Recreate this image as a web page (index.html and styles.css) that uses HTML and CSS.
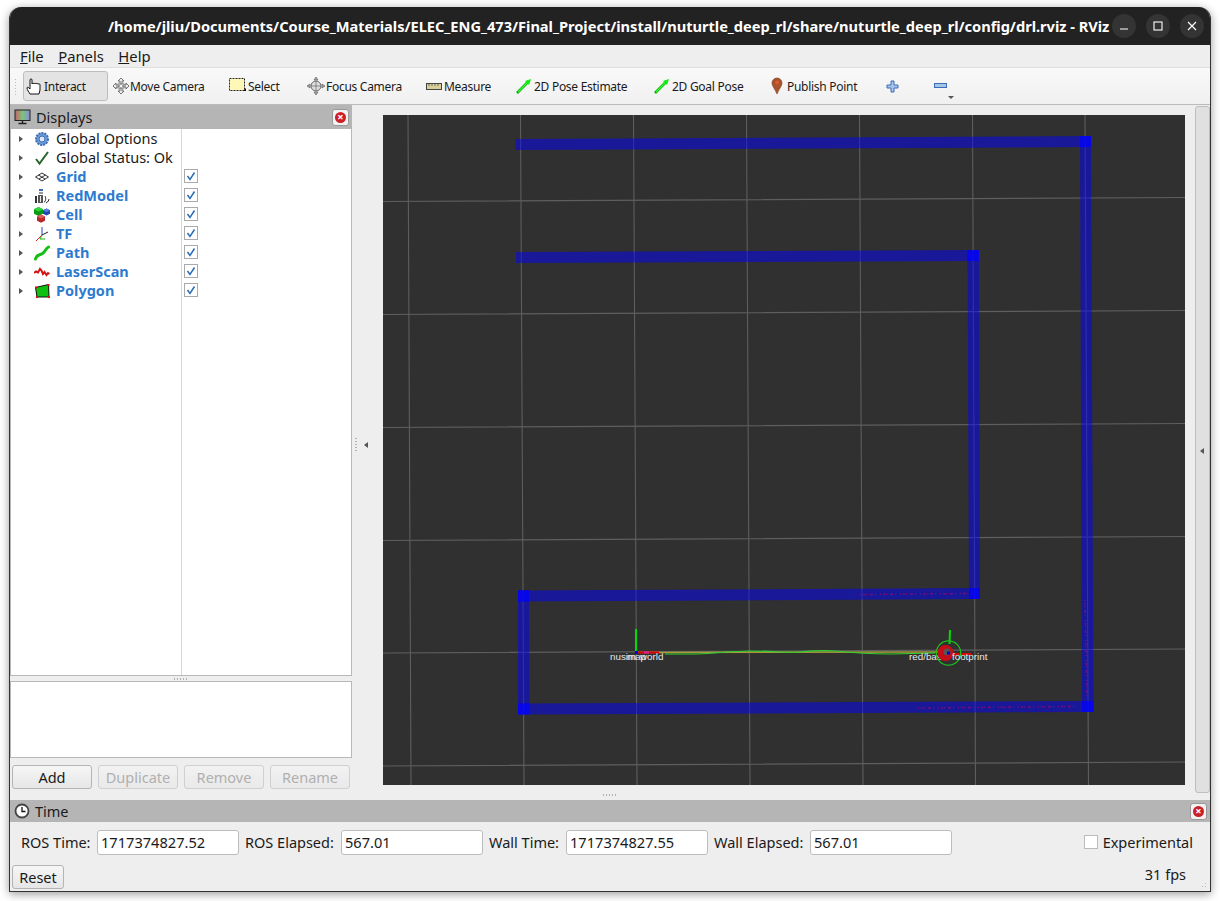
FILE: index.html
```html
<!DOCTYPE html>
<html lang="en">
<head>
<meta charset="utf-8">
<title>RViz</title>
<link rel="stylesheet" href="styles.css">
</head>
<body>
<div class="window">
  <header class="titlebar">
    <div class="title">/home/jliu/Documents/Course_Materials/ELEC_ENG_473/Final_Project/install/nuturtle_deep_rl/share/nuturtle_deep_rl/config/drl.rviz - RViz</div>
    <div class="wm">
      <span class="wm-btn"><svg width="10" height="10" viewBox="0 0 10 10"><path d="M1 8h8" stroke="#fff" stroke-width="1.2"/></svg></span>
      <span class="wm-btn"><svg width="10" height="10" viewBox="0 0 10 10"><rect x="1" y="1" width="8" height="8" fill="none" stroke="#fff" stroke-width="1.1"/></svg></span>
      <span class="wm-btn"><svg width="10" height="10" viewBox="0 0 10 10"><path d="M1 1l8 8M9 1l-8 8" stroke="#fff" stroke-width="1.1"/></svg></span>
    </div>
  </header>
  <nav class="menubar">
    <span><u>F</u>ile</span><span><u>P</u>anels</span><span><u>H</u>elp</span>
  </nav>
  <div class="toolbar">
    <div class="grip"></div>
    <div class="tool active tool-interact">
      <svg width="18" height="18" viewBox="0 0 18 18"><path d="M4 17c-1-2-3-4-3-6 0-1 1-1 2 0l1 1V3c0-1.500 2-1.500 2 0v4c0-1 2-1 2 0 0-1 2-1 2 0 0-.8 2-.8 2 .2 0-.6 2-.6 2 .5V13l-1 4z" fill="#fff" stroke="#111" stroke-width="1"/></svg>
      <span>Interact</span>
    </div>
    <div class="tool tool-move">
      <svg width="18" height="18" viewBox="0 0 18 18"><path d="M9 1l3 3h-2v3h-2V4H6zM9 17l3-3h-2v-3h-2v3H6zM1 9l3-3v2h3v2H4v2zM17 9l-3-3v2h-3v2h3v2z" fill="#eee" stroke="#555" stroke-width=".8"/><path d="M5 7h8v4H5zM7 5v8M11 5v8" fill="none" stroke="#888" stroke-width=".6"/></svg>
      <span>Move Camera</span>
    </div>
    <div class="tool tool-select">
      <svg width="17" height="16" viewBox="0 0 17 16"><rect x=".5" y=".5" width="15" height="12" fill="#fdf8b8" stroke="#222" stroke-dasharray="2 1"/><path d="M14 13h3v-3z" fill="#111"/></svg>
      <span>Select</span>
    </div>
    <div class="tool tool-focus">
      <svg width="18" height="18" viewBox="0 0 18 18"><circle cx="9" cy="9" r="5" fill="#ddd" stroke="#666"/><path d="M9 0l2 3H7zM9 18l2-3H7zM0 9l3-2v4zM18 9l-3-2v4zM4 9h10M9 4v10" fill="#aaa" stroke="#666" stroke-width=".7"/></svg>
      <span>Focus Camera</span>
    </div>
    <div class="tool tool-measure">
      <svg width="16" height="7" viewBox="0 0 16 7"><rect x=".5" y=".5" width="15" height="6" fill="#d8cf9a" stroke="#444"/><path d="M3 1v2M6 1v2M9 1v2M12 1v2" stroke="#444" stroke-width=".7"/></svg>
      <span>Measure</span>
    </div>
    <div class="tool tool-pose">
      <svg width="16" height="16" viewBox="0 0 16 16"><path d="M1 15L13 3" stroke="#0a0" stroke-width="2.600"/><path d="M2 14L13 3" stroke="#3f3" stroke-width="1.200"/><path d="M15 1L9 3l4 4z" fill="#1e1"/></svg>
      <span>2D Pose Estimate</span>
    </div>
    <div class="tool tool-goal">
      <svg width="16" height="16" viewBox="0 0 16 16"><path d="M1 15L13 3" stroke="#0a0" stroke-width="2.600"/><path d="M2 14L13 3" stroke="#3f3" stroke-width="1.200"/><path d="M15 1L9 3l4 4z" fill="#1e1"/></svg>
      <span>2D Goal Pose</span>
    </div>
    <div class="tool tool-point">
      <svg width="12" height="18" viewBox="0 0 12 18"><path d="M6 17C4 12 1 9 1 6a5 5 0 0 1 10 0c0 3-3 6-5 11z" fill="#a8552f" stroke="#7a3a20" stroke-width=".6"/><circle cx="6" cy="5.500" r="1.800" fill="#e35a2a"/></svg>
      <span>Publish Point</span>
    </div>
    <div class="tool tool-plus">
      <svg width="13" height="13" viewBox="0 0 13 13"><path d="M5 1h3v4h4v3H8v4H5V8H1V5h4z" fill="#a9c4ea" stroke="#3b6db5"/></svg>
    </div>
    <div class="tool tool-minus">
      <svg width="13" height="6" viewBox="0 0 13 6"><rect x=".5" y=".5" width="12" height="4" fill="#a9c4ea" stroke="#3b6db5"/></svg>
      <i class="more"></i>
    </div>
  </div>

  <div class="main">
    <aside class="dock">
      <div class="dock-title">
        <svg class="dock-icon" width="17" height="16" viewBox="0 0 17 16"><defs><linearGradient id="scr" x1="0" x2="1" y1="0" y2="0"><stop offset="0" stop-color="#c8626a"/><stop offset=".5" stop-color="#7cc47c"/><stop offset="1" stop-color="#8a8ad8"/></linearGradient></defs><rect x="1" y="1" width="15" height="10.500" fill="url(#scr)" stroke="#222"/><path d="M8.500 12v2M4.500 14.500h8" stroke="#222" stroke-width="1.400"/></svg>
        <span>Displays</span>
        <span class="close"><i></i></span>
      </div>
      <div class="tree">
        <div class="row"><i class="arrow"></i><svg class="ico" viewBox="0 0 16 16"><circle cx="8" cy="8" r="6" fill="#6f9bd8" stroke="#3b6db5" stroke-width="2" stroke-dasharray="2 1"/><circle cx="8" cy="8" r="3" fill="#dbe7f7" stroke="#3b6db5"/></svg><span class="label">Global Options</span></div>
        <div class="row"><i class="arrow"></i><svg class="ico" viewBox="0 0 16 16"><path d="M2 9l3.500 4.500L14 2" fill="none" stroke="#26662c" stroke-width="2"/></svg><span class="label">Global Status: Ok</span></div>
        <div class="row"><i class="arrow"></i><svg class="ico" viewBox="0 0 16 16"><path d="M1.500 8L8 4l6.500 4L8 12zM4.500 6L11 10M11.500 6L5 10" fill="none" stroke="#333" stroke-width="1"/></svg><span class="label link">Grid</span><span class="check"><svg width="12" height="12" viewBox="0 0 12 12"><path d="M2.500 6l2.500 3.500 4.500-7" fill="none" stroke="#2a6cb5" stroke-width="1.500"/></svg></span></div>
        <div class="row"><i class="arrow"></i><svg class="ico" viewBox="0 0 16 16"><rect x="5" y="1" width="4" height="2" fill="#3b6db5"/><path d="M5 4h4v2H5z" fill="#999"/><rect x="1" y="8" width="2" height="7" fill="#333"/><rect x="4" y="7" width="5" height="8" fill="#555"/><path d="M6 8h1v6H6z" fill="#eee"/><path d="M10 14c2 0 2-5 1-6M12 15c2-1 3-3 3-4" stroke="#222" fill="none"/></svg><span class="label link">RedModel</span><span class="check"><svg width="12" height="12" viewBox="0 0 12 12"><path d="M2.500 6l2.500 3.500 4.500-7" fill="none" stroke="#2a6cb5" stroke-width="1.500"/></svg></span></div>
        <div class="row"><i class="arrow"></i><svg class="ico" viewBox="0 0 16 16"><path d="M4.500 0L9 2.300v4.400L4.500 9 0 6.700V2.300z" fill="#0b9a16"/><path d="M4.500 0L9 2.300 4.500 4.600 0 2.300z" fill="#2fd83a"/><path d="M12.500 1.500L16 3.300v3.400l-3.500 1.800L9 6.700V3.300z" fill="#2448b8"/><path d="M12.500 1.500L16 3.300l-3.500 1.800L9 3.300z" fill="#5a80e8"/><path d="M7 7.500l4 2v4.300l-4 2-4-2V9.500z" fill="#b52a2a"/><path d="M7 7.500l4 2-4 2-4-2z" fill="#e06060"/></svg><span class="label link">Cell</span><span class="check"><svg width="12" height="12" viewBox="0 0 12 12"><path d="M2.500 6l2.500 3.500 4.500-7" fill="none" stroke="#2a6cb5" stroke-width="1.500"/></svg></span></div>
        <div class="row"><i class="arrow"></i><svg class="ico" viewBox="0 0 16 16"><path d="M8 9V1" stroke="#2b3fc8"/><path d="M8 9l6-3" stroke="#222"/><path d="M8 9L2 15" stroke="#d22"/><path d="M8 9l-2 4 5 0" stroke="#1b1" fill="none"/></svg><span class="label link">TF</span><span class="check"><svg width="12" height="12" viewBox="0 0 12 12"><path d="M2.500 6l2.500 3.500 4.500-7" fill="none" stroke="#2a6cb5" stroke-width="1.500"/></svg></span></div>
        <div class="row"><i class="arrow"></i><svg class="ico" viewBox="0 0 16 16"><path d="M1.500 14c1-5 4-3.500 7-5.500s3-5 6-6.500" fill="none" stroke="#12c012" stroke-width="3" stroke-linecap="round"/></svg><span class="label link">Path</span><span class="check"><svg width="12" height="12" viewBox="0 0 12 12"><path d="M2.500 6l2.500 3.500 4.500-7" fill="none" stroke="#2a6cb5" stroke-width="1.500"/></svg></span></div>
        <div class="row"><i class="arrow"></i><svg class="ico" viewBox="0 0 16 16"><path d="M0 9l2-1.500 2 1 2-3.500 1.500 1.500 1.500 3.500 1.500-2 2 3 1.500-2 1.500 1" fill="none" stroke="#d41414" stroke-width="2"/></svg><span class="label link">LaserScan</span><span class="check"><svg width="12" height="12" viewBox="0 0 12 12"><path d="M2.500 6l2.500 3.500 4.500-7" fill="none" stroke="#2a6cb5" stroke-width="1.500"/></svg></span></div>
        <div class="row"><i class="arrow"></i><svg class="ico" viewBox="0 0 16 16"><path d="M1.500 4.500L14.500 1.500 15 14H3z" fill="#10c010" stroke="#111"/><path d="M1 3.500h2v2H1zM13.500 1h2v2h-2zM14 13h2v2h-2zM2 13h2v2H2z" fill="#e01010"/></svg><span class="label link">Polygon</span><span class="check"><svg width="12" height="12" viewBox="0 0 12 12"><path d="M2.500 6l2.500 3.500 4.500-7" fill="none" stroke="#2a6cb5" stroke-width="1.500"/></svg></span></div>
      </div>
      <div class="splitter"><i class="dots"></i></div>
      <div class="desc"></div>
      <div class="dock-buttons">
        <button class="btn">Add</button>
        <button class="btn off">Duplicate</button>
        <button class="btn off">Remove</button>
        <button class="btn off">Rename</button>
      </div>
    </aside>
    <div class="collapse"><i class="vgrip"></i><i class="tri-left"></i></div>
    <div class="view">
      <svg class="scene" width="802" height="670" viewBox="383 115 802 670">
        <rect x="383" y="115" width="802" height="670" fill="#303030"/>
        <g class="grid">
          <path d="M408 115L411 785M520.500 115L524 785M633.500 115L637 785M746.500 115L750 785M859.500 115L863 785M972.500 115L975.500 785M1085 115L1088.500 785"/>
          <path d="M383 201.500L1185 197.500M383 314.500L1185 310.500M383 427.500L1185 423.500M383 540.500L1185 536.500M383 653L1185 649M383 766L1185 762"/>
        </g>
        <g class="walls">
          <polygon points="515.500,139 1091,136 1091,147 515.500,150"/>
          <polygon points="1080,136 1091,136 1093.500,712 1082,712"/>
          <polygon points="516,252 979,250 979,261 516,263"/>
          <polygon points="967.500,250 979,250 980,599 969,599"/>
          <polygon points="518,590.500 980,588 980,599 518,601.500"/>
          <polygon points="518,590 529,590 529.500,714.500 518,714.500"/>
          <polygon points="518,703.500 1093.500,701 1093.500,712 518,714.500"/>
          <polygon points="1080,136 1091,136 1091,147 1080,147"/>
          <polygon points="967.500,250 979,250 979,261 967.500,261"/>
          <polygon points="969,588 980,588 980,599 969,599"/>
          <polygon points="518,590.500 529,590.500 529,601.500 518,601.500"/>
          <polygon points="518,703.500 529.500,703.500 529.500,714.500 518,714.500"/>
          <polygon points="1082,701 1093.500,701 1093.500,712 1082,712"/>
        </g>
        <path class="scan" d="M860 594.500L968 593.500M918 708L1076 706.500M1085 600L1087 700"/>
        <path class="trail-a" d="M640 652.500L940 652"/>
        <path class="trail-b" d="M665 654L690 654C710 654 730 651 750 651S790 653 800 652 825 650 835 651 870 654 890 654L935 653"/>
        <path class="axis-g" d="M636 629V652"/>
        <path class="axis-r" d="M638 652.500H659"/>
        <path class="axis-m" d="M644 652.500h5"/>
        <rect x="635" y="651" width="3" height="3" fill="#0000e0"/>
        <text class="tf" x="610" y="660">nusim</text>
        <text class="tf" x="627" y="660">map</text>
        <text class="tf" x="640" y="660">world</text>
        <text class="tf" x="909" y="660">red/base</text>
        <path class="axis-r" d="M950 654H971.500"/>
        <circle class="blob" cx="945.500" cy="653" r="8"/>
        <circle cx="947" cy="652" r="3.500" fill="#555"/>
        <rect x="947" y="651.500" width="3" height="3" fill="#0000e0"/>
        <path class="axis-g" d="M950 630L949.500 644"/>
        <circle class="ring" cx="948.500" cy="653" r="12.200"/>
        <text class="tf" x="952" y="660">footprint</text>
      </svg>
    </div>
    <div class="scroll"><div class="thumb"></div></div>
  </div>
  <div class="hsplit"><i class="dots"></i></div>
  <section class="time">
    <div class="dock-title time-title">
      <svg class="dock-icon" width="16" height="16" viewBox="0 0 16 16"><circle cx="8" cy="8" r="6.500" fill="#fff" stroke="#444" stroke-width="1.800"/><path d="M8 4v4.500h3.500" fill="none" stroke="#111" stroke-width="1.300"/></svg>
      <span>Time</span>
      <span class="close"><i></i></span>
    </div>
    <div class="time-row">
      <label class="lab-time">ROS Time:</label><span class="field">1717374827.52</span>
      <label class="lab-elapsed">ROS Elapsed:</label><span class="field">567.01</span>
      <label class="lab-wall">Wall Time:</label><span class="field">1717374827.55</span>
      <label class="lab-elapsed">Wall Elapsed:</label><span class="field">567.01</span>
      <span class="exp"><span class="box"></span>Experimental</span>
    </div>
    <div class="reset-row">
      <button class="btn reset">Reset</button>
      <span class="fps">31 fps</span>
    </div>
    <i class="sizegrip"></i>
  </section>
</div>
</body>
</html>
```
FILE: styles.css
```css
* { box-sizing: border-box; }
html, body { margin: 0; height: 100%; }
body {
  background: #fff;
  font-family: "Noto Sans", "Open Sans", sans-serif;
  font-size: 14px;
  color: #1a1a1a;
  padding: 7px 9px 9px 9px;
  overflow: hidden;
}
.window {
  width: 1202px;
  height: 885px;
  background: #eeeeee;
  border-radius: 12px 12px 0 0;
  box-shadow: 0 2px 10px rgba(0,0,0,.4);
  border: 1px solid #333;
  border-top: 0;
  display: flex;
  flex-direction: column;
  overflow: hidden;
}
.titlebar {
  height: 38px;
  flex: none;
  background: #222;
  color: #fff;
  display: flex;
  align-items: center;
  position: relative;
  padding-left: 98px;
}
.title {
  font-size: 14.650px;
  font-weight: 700;
  white-space: nowrap;
  letter-spacing: -.03px;
}
.wm { position: absolute; right: 6px; top: 7px; display: flex; gap: 10px; }
.wm-btn {
  width: 24px; height: 24px; border-radius: 50%;
  background: #343434;
  display: flex; align-items: center; justify-content: center;
}
.menubar {
  height: 22px; flex: none;
  background: #eeeeee;
  display: flex;
  gap: 14.500px;
  padding-left: 10px;
  align-items: center;
  font-size: 14.800px;
}
.toolbar {
  height: 38px; flex: none;
  display: flex;
  align-items: center;
  position: relative;
  background: linear-gradient(#f9f9f9, #f0f0f0);
  border-top: 1px solid #dedede;
  border-bottom: 1px solid #bbb;
  font-size: 12px;
  letter-spacing: -.28px;
}
.grip {
  width: 4px; height: 17px; margin: 0 5px 0 4px; flex: none;
  background-image: radial-gradient(#bbb 40%, transparent 45%);
  background-size: 3px 3px;
}
.tool { display: flex; align-items: center; height: 30px; flex: none; }
.tool svg { flex: none; }
.active { background: #e3e3e3; border: 1px solid #bdbdbd; border-radius: 3px; padding-left: 2px; }
.tool-interact { width: 85px; }
.tool-move { margin-left: 4px; width: 103px; }
.tool-select { margin-left: 14px; width: 78px; gap: 2px; }
.tool-focus { width: 119px; gap: 1px; }
.tool-measure { width: 88px; gap: 2px; }
.tool-pose { width: 138px; gap: 2px; margin-left: 2px; }
.tool-goal { width: 117px; gap: 2px; }
.tool-point { width: 115px; gap: 4px; }
.tool-plus { width: 48px; }
.tool-minus { width: 20px; position: relative; }
.more {
  position: absolute; left: 14px; top: 25px;
  border-left: 3px solid transparent; border-right: 3px solid transparent; border-top: 3px solid #555;
}
.main { flex: 1; min-height: 0; display: flex; position: relative; }
.dock { width: 342px; flex: none; display: flex; flex-direction: column; }
.dock-title {
  height: 24px; flex: none;
  background: #b5b5b5;
  display: flex;
  align-items: center;
  font-size: 14.500px;
  padding: 0 3px 0 4px;
  gap: 5px;
}
.dock-icon { flex: none; }
.close {
  margin-left: auto;
  width: 17px; height: 17px;
  background: #f2f2f2;
  border: 1px solid #999;
  border-radius: 3px;
  display: flex; align-items: center; justify-content: center;
}
.close i {
  width: 11px; height: 11px; border-radius: 50%;
  background: #cc1e26;
  position: relative;
  display: block;
}
.close i::before {
  content: "×"; position: absolute; left: 0; right: 0; top: -4px;
  text-align: center; color: #fff; font-size: 11px; font-style: normal; font-weight: 700;
  line-height: 18px;
}
.tree {
  height: 547px; flex: none;
  background: #fff;
  border: 1px solid #b8b8b8;
  border-top: 0;
  background-image: linear-gradient(#d8d8d8, #d8d8d8);
  background-size: 1px 100%;
  background-position: 170px 0;
  background-repeat: no-repeat;
}
.row { height: 19px; display: flex; align-items: center; position: relative; font-size: 14.500px; }
.arrow {
  margin-left: 8px; width: 0; height: 0; flex: none;
  border-top: 3.500px solid transparent; border-bottom: 3.500px solid transparent;
  border-left: 4px solid #555;
}
.ico { width: 16px; height: 16px; margin-left: 11px; flex: none; }
.label { margin-left: 6px; white-space: nowrap; padding-bottom: 2px; }
.link { color: #2d7bd0; font-weight: 700; }
.check {
  position: absolute; left: 173px; top: 2px;
  width: 14px; height: 14px;
  background: #fff;
  border: 1px solid #aaa;
  display: flex; align-items: center; justify-content: center;
}
.splitter {
  height: 5px; flex: none;
  display: flex; justify-content: center; align-items: center;
}
.dots {
  display: block;
  width: 16px; height: 2px;
  background-image: radial-gradient(#b0b0b0 45%, transparent 50%);
  background-size: 3px 2px;
}
.desc { height: 77px; flex: none; background: #fff; border: 1px solid #b8b8b8; }
.dock-buttons { display: flex; gap: 6px; padding: 7px 0 0 2px; }
.btn {
  width: 80px; height: 24px;
  font: inherit; font-size: 14.500px;
  color: #1a1a1a;
  background: linear-gradient(#f6f6f6, #e6e6e6);
  border: 1px solid #b4b4b4;
  border-radius: 3px;
  padding: 0;
}
.btn.off { color: #b0b0b0; border-color: #d0d0d0; background: linear-gradient(#f2f2f2, #e9e9e9); }
.collapse {
  width: 31px; flex: none;
  display: flex; align-items: center; padding-left: 3px;
}
.vgrip {
  width: 2px; height: 16px;
  background-image: radial-gradient(#b0b0b0 45%, transparent 50%);
  background-size: 2px 3px;
}
.tri-left {
  border-top: 3.500px solid transparent; border-bottom: 3.500px solid transparent;
  border-right: 4px solid #555;
  margin-left: 7px;
}
.view { width: 802px; height: 670px; margin-top: 10px; flex: none; }
.scene { display: block; }
.grid path { stroke: #5e5e5e; stroke-width: 1.100; fill: none; }
.walls polygon { fill: rgba(0,0,255,.5); }
.scan { stroke: #8a1070; stroke-width: 1.500; fill: none; stroke-dasharray: 1 2 2 1 1 3 3 2 1 4; opacity: .75; }
.trail-a { stroke: #a89a3c; stroke-width: 1.500; fill: none; }
.trail-b { stroke: #2ed12e; stroke-width: 1.200; fill: none; }
.axis-g { stroke: #00dd00; stroke-width: 2; fill: none; }
.axis-r { stroke: #e00000; stroke-width: 2; fill: none; }
.axis-m { stroke: #e0209a; stroke-width: 2; fill: none; }
.blob { fill: #c40d16; }
.ring { fill: none; stroke: #1bc41b; stroke-width: 1.200; }
.tf { font-family: "Liberation Sans", Arial, sans-serif; font-size: 9.800px; fill: #e8e8e8; }
.scroll {
  position: absolute; right: 0; top: 0; bottom: 0; width: 16px;
  display: flex; justify-content: flex-end;
}
.thumb {
  width: 15px; height: 687px; margin-top: 1px; flex: none;
  background: #e0e0e0; border: 1px solid #bdbdbd; border-radius: 3px;
  position: relative;
}
.thumb::after {
  content: ""; position: absolute; left: 4px; top: 341px;
  border-top: 3.500px solid transparent; border-bottom: 3.500px solid transparent;
  border-right: 4px solid #555;
}
.hsplit { height: 15px; flex: none; display: flex; justify-content: center; align-items: flex-end; padding-bottom: 4px; }
.time { flex: none; height: 91px; position: relative; }
.time-title { height: 22px; }
.time-row {
  height: 40px; display: flex; align-items: center;
  padding-left: 11px; font-size: 14.500px;
}
.time-row label { white-space: nowrap; }
.lab-time { width: 76px; }
.lab-elapsed { width: 96px; }
.lab-wall { width: 77px; }
.field {
  width: 142px; height: 25px; margin-right: 6px; flex: none;
  background: #fff; border: 1px solid #bdbdbd; border-radius: 3px;
  padding-left: 3px; line-height: 23px; font-size: 14.600px;
}
.exp { margin-left: auto; margin-right: 17px; display: flex; align-items: center; gap: 5px; }
.box { width: 14px; height: 14px; background: #fff; border: 1px solid #bbb; }
.reset-row { display: flex; align-items: center; justify-content: space-between; padding: 0 24px 0 2px; height: 25px; margin-top: 2px; }
.reset { width: 52px; height: 24px; }
.fps { font-size: 14.500px; padding-bottom: 6px; }
.sizegrip {
  position: absolute; right: 2px; bottom: 2px; width: 10px; height: 10px;
  background-image: radial-gradient(#bbb 40%, transparent 45%);
  background-size: 3px 3px;
  clip-path: polygon(100% 0, 100% 100%, 0 100%);
}
```
